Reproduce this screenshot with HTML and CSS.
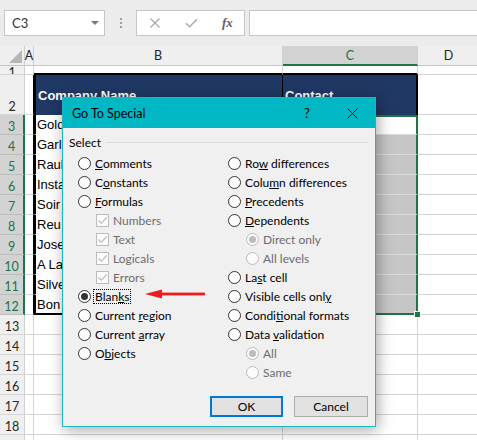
FILE: index.html
```html
<!DOCTYPE html>
<html>
<head>
<meta charset="utf-8">
<link rel="stylesheet" href="styles.css">
</head>
<body>
<div class="toolbar">
  <div class="namebox"><span>C3</span><span class="dd"></span></div>
  <div class="grip"><i></i><i></i><i></i></div>
  <div class="fxbox">
    <svg class="ico-x" width="10" height="10" viewBox="0 0 10 10"><path d="M0.5 0.5L9.5 9.5M9.5 0.5L0.5 9.5" stroke="#a9a9a9" stroke-width="1.3" fill="none"/></svg>
    <svg class="ico-ok" width="13" height="10" viewBox="0 0 13 10"><path d="M1 5.2L4.6 8.8L12 1.2" stroke="#a9a9a9" stroke-width="1.5" fill="none"/></svg>
    <span class="fx">fx</span>
  </div>
  <div class="formula"></div>
</div>

<div class="sheet">
  <div class="corner"><svg width="24" height="19" viewBox="0 0 24 19"><path d="M9 17H22V4Z" fill="#b7b7b7"/></svg></div>
  <div class="ch">A</div>
  <div class="ch">B</div>
  <div class="ch sel">C</div>
  <div class="ch">D</div>

  <div class="rh r1">1</div>
  <div class="c"></div>
  <div class="c ttop"></div>
  <div class="c ttop"></div>
  <div class="c"></div>

  <div class="rh">2</div>
  <div class="c tl"></div>
  <div class="c hdr hb">Company Name</div>
  <div class="c hdr hc">Contact</div>
  <div class="c"></div>

  <div class="rh sel">3</div>
  <div class="c tl"></div>
  <div class="c tb">Gold</div>
  <div class="c sc first"></div>
  <div class="c"></div>

  <div class="rh sel">4</div>
  <div class="c tl"></div>
  <div class="c tb">Garl</div>
  <div class="c sc gray"></div>
  <div class="c"></div>

  <div class="rh sel">5</div>
  <div class="c tl"></div>
  <div class="c tb">Raul</div>
  <div class="c sc gray"></div>
  <div class="c"></div>

  <div class="rh sel">6</div>
  <div class="c tl"></div>
  <div class="c tb">Insta</div>
  <div class="c sc gray"></div>
  <div class="c"></div>

  <div class="rh sel">7</div>
  <div class="c tl"></div>
  <div class="c tb">Soir</div>
  <div class="c sc gray"></div>
  <div class="c"></div>

  <div class="rh sel">8</div>
  <div class="c tl"></div>
  <div class="c tb">Reu</div>
  <div class="c sc gray"></div>
  <div class="c"></div>

  <div class="rh sel">9</div>
  <div class="c tl"></div>
  <div class="c tb">Jose</div>
  <div class="c sc gray"></div>
  <div class="c"></div>

  <div class="rh sel">10</div>
  <div class="c tl"></div>
  <div class="c tb">A La</div>
  <div class="c sc gray"></div>
  <div class="c"></div>

  <div class="rh sel">11</div>
  <div class="c tl"></div>
  <div class="c tb">Silve</div>
  <div class="c sc gray"></div>
  <div class="c"></div>

  <div class="rh sel">12</div>
  <div class="c tl"></div>
  <div class="c tb tbot">Bon</div>
  <div class="c sc gray last"><span class="handle"></span></div>
  <div class="c"></div>

  <div class="rh">13</div><div class="c"></div><div class="c"></div><div class="c"></div><div class="c"></div>
  <div class="rh">14</div><div class="c"></div><div class="c"></div><div class="c"></div><div class="c"></div>
  <div class="rh">15</div><div class="c"></div><div class="c"></div><div class="c"></div><div class="c"></div>
  <div class="rh">16</div><div class="c"></div><div class="c"></div><div class="c"></div><div class="c"></div>
  <div class="rh">17</div><div class="c"></div><div class="c"></div><div class="c"></div><div class="c"></div>
  <div class="rh">18</div><div class="c"></div><div class="c"></div><div class="c"></div><div class="c"></div>
  <div class="rh"></div><div class="c"></div><div class="c"></div><div class="c"></div><div class="c"></div>
</div>

<div class="dialog">
  <div class="titlebar">
    <span class="title">Go To Special</span>
    <span class="help">?</span>
    <svg class="close" width="11" height="11" viewBox="0 0 11 11"><path d="M0.5 0.5L10.5 10.5M10.5 0.5L0.5 10.5" stroke="#000" stroke-width="1" fill="none"/></svg>
  </div>
  <div class="dbody">
    <div class="group"><span>Select</span><span class="gline"></span></div>
    <div class="opts">
      <div class="col left">
        <div class="opt"><span class="radio"></span><span><u>C</u>omments</span></div>
        <div class="opt"><span class="radio"></span><span>C<u>o</u>nstants</span></div>
        <div class="opt"><span class="radio"></span><span><u>F</u>ormulas</span></div>
        <div class="opt sub dis"><span class="chk"><svg width="11" height="11" viewBox="0 0 11 11"><path d="M1.5 5.5L4.3 8.3L9.8 2.3" stroke="#b4b4b4" stroke-width="1.1" fill="none"/></svg></span><span>Numbers</span></div>
        <div class="opt sub dis"><span class="chk"><svg width="11" height="11" viewBox="0 0 11 11"><path d="M1.5 5.5L4.3 8.3L9.8 2.3" stroke="#b4b4b4" stroke-width="1.1" fill="none"/></svg></span><span>Text</span></div>
        <div class="opt sub dis"><span class="chk"><svg width="11" height="11" viewBox="0 0 11 11"><path d="M1.5 5.5L4.3 8.3L9.8 2.3" stroke="#b4b4b4" stroke-width="1.1" fill="none"/></svg></span><span>Logicals</span></div>
        <div class="opt sub dis"><span class="chk"><svg width="11" height="11" viewBox="0 0 11 11"><path d="M1.5 5.5L4.3 8.3L9.8 2.3" stroke="#b4b4b4" stroke-width="1.1" fill="none"/></svg></span><span>Errors</span></div>
        <div class="opt"><span class="radio on"></span><span class="focus">Blan<u>k</u>s</span></div>
        <div class="opt"><span class="radio"></span><span>Current <u>r</u>egion</span></div>
        <div class="opt"><span class="radio"></span><span>Current <u>a</u>rray</span></div>
        <div class="opt"><span class="radio"></span><span>O<u>b</u>jects</span></div>
      </div>
      <div class="col right">
        <div class="opt"><span class="radio"></span><span>Ro<u>w</u> differences</span></div>
        <div class="opt"><span class="radio"></span><span>Colu<u>m</u>n differences</span></div>
        <div class="opt"><span class="radio"></span><span><u>P</u>recedents</span></div>
        <div class="opt"><span class="radio"></span><span><u>D</u>ependents</span></div>
        <div class="opt sub dis"><span class="radio dis on"></span><span>Direct only</span></div>
        <div class="opt sub dis"><span class="radio dis"></span><span>All levels</span></div>
        <div class="opt"><span class="radio"></span><span>La<u>s</u>t cell</span></div>
        <div class="opt"><span class="radio"></span><span>Visible cells onl<u>y</u></span></div>
        <div class="opt"><span class="radio"></span><span>Condi<u>t</u>ional formats</span></div>
        <div class="opt"><span class="radio"></span><span>Data <u>v</u>alidation</span></div>
        <div class="opt sub dis"><span class="radio dis on"></span><span>All</span></div>
        <div class="opt sub dis"><span class="radio dis"></span><span>Same</span></div>
      </div>
    </div>
    <div class="buttons">
      <div class="btn ok">OK</div>
      <div class="btn cancel">Cancel</div>
    </div>
  </div>
</div>

<svg class="arrow" width="62" height="12" viewBox="0 0 62 12"><path d="M0 6L17 1.5V10.5Z" fill="#ee1c1c"/><rect x="16" y="4.6" width="44" height="2.8" fill="#ee1c1c"/></svg>
</body>
</html>
```

FILE: styles.css
```css
* { box-sizing: border-box; }
html, body { margin: 0; padding: 0; }
body {
  width: 477px;
  height: 440px;
  overflow: hidden;
  background: #fff;
  font-family: "Lato", "Noto Sans", sans-serif;
  color: #000;
  position: relative;
}

/* ---------- toolbar ---------- */
.toolbar {
  height: 46px;
  background: #ececec;
  display: flex;
  align-items: flex-start;
  padding: 10px 0 0 4px;
}
.namebox {
  width: 101px;
  height: 26px;
  background: #fff;
  border: 1px solid #c6c6c6;
  display: flex;
  align-items: center;
  justify-content: space-between;
  padding: 0 5px 0 7px;
  font-size: 13px;
  color: #333;
}
.dd {
  width: 0;
  height: 0;
  border-left: 4px solid transparent;
  border-right: 4px solid transparent;
  border-top: 4px solid #7a7a7a;
}
.grip {
  width: 31px;
  height: 26px;
  display: flex;
  flex-direction: column;
  align-items: center;
  justify-content: center;
  gap: 2px;
}
.grip i { display: block; width: 2px; height: 2px; background: #a0a0a0; }
.fxbox {
  width: 109px;
  height: 26px;
  background: #fff;
  border: 1px solid #c6c6c6;
  display: flex;
  align-items: center;
  padding-left: 13px;
}
.ico-ok { margin-left: 25px; }
.fx {
  margin-left: 24px;
  font-family: "Liberation Serif", serif;
  font-style: italic;
  font-weight: bold;
  font-size: 13px;
  color: #5f5f5f;
}
.formula {
  flex: 1;
  height: 26px;
  margin-left: 4px;
  margin-right: -5px;
  background: #fff;
  border: 1px solid #c6c6c6;
}

/* ---------- sheet ---------- */
.sheet {
  display: grid;
  grid-template-columns: 25px 9px 249px 135px 62px;
  grid-template-rows: 20px 9px 40px repeat(17, 20px);
}
.corner, .ch, .rh {
  background: #efefef;
  font-size: 12.5px;
  color: #262626;
}
.corner {
  border-right: 1px solid #d0d0d0;
  border-bottom: 1px solid #c6c6c6;
}
.corner svg { display: block; }
.ch {
  border-right: 1px solid #d0d0d0;
  border-bottom: 1px solid #c6c6c6;
  display: flex;
  align-items: center;
  justify-content: center;
}
.ch.sel {
  background: #d2d2d2;
  border-bottom: 2px solid #217346;
  color: #217346;
}
.rh {
  border-right: 1px solid #d0d0d0;
  border-bottom: 1px solid #d6d6d6;
  display: flex;
  align-items: flex-end;
  justify-content: center;
  line-height: 14px;
  overflow: hidden;
}
.rh.r1 { align-items: flex-start; }
.rh.sel {
  background: #d2d2d2;
  border-right: 2px solid #217346;
  border-bottom-color: #bdbdbd;
  color: #217346;
}
.c {
  border-right: 1px solid #d4d4d4;
  border-bottom: 1px solid #d4d4d4;
  min-width: 0;
  overflow: hidden;
}
.ttop { border-bottom: 2px solid #000; }
.tl { border-right: 1px solid #000; }
.hdr {
  background: #203864;
  color: #fff;
  font-family: "Liberation Sans", sans-serif;
  font-weight: bold;
  font-size: 13px;
  display: flex;
  align-items: center;
  white-space: nowrap;
  border-bottom: 0;
}
.hb { border-left: 2px solid #000; border-right: 1px solid #000; padding-left: 2px; }
.hc { border-right: 2px solid #000; padding-left: 2px; }
.tb {
  border-left: 2px solid #000;
  border-right: 0;
  border-bottom: 1px solid #fff;
  display: flex;
  align-items: center;
  padding-left: 1px;
  font-family: "Liberation Sans", sans-serif;
  font-size: 13px;
  white-space: nowrap;
}
.tb.tbot { border-bottom: 2px solid #000; }
.sc {
  border-left: 2px solid #217346;
  border-right: 2px solid #217346;
  border-bottom: 1px solid #dcdcdc;
}
.sc.first { border-top: 2px solid #217346; background: #fff; }
.sc.gray { background: #c6c6c6; }
.sc.last {
  border-bottom: 2px solid #217346;
  position: relative;
  overflow: visible;
}
.handle {
  position: absolute;
  right: -5px;
  bottom: -5px;
  width: 7px;
  height: 7px;
  background: #217346;
  border: 1px solid #fff;
}

/* ---------- dialog ---------- */
.dialog {
  position: absolute;
  left: 62px;
  top: 97px;
  width: 314px;
  height: 330px;
  border: 1px solid #1ab6c2;
  background: #f0f0f0;
  box-shadow: 2px 3px 14px rgba(0, 0, 0, 0.35);
  display: flex;
  flex-direction: column;
  font-size: 12px;
}
.titlebar {
  height: 30px;
  background: #00b7c3;
  display: flex;
  align-items: center;
  padding: 0 17px 0 9px;
  flex: none;
}
.title { flex: 1; font-size: 12.5px; }
.help { width: 12px; text-align: center; margin-right: 34px; font-size: 13px; }
.close { display: block; }
.dbody {
  flex: 1;
  display: flex;
  flex-direction: column;
  padding: 6px 7px 9px 6px;
}
.group {
  display: flex;
  align-items: center;
  height: 16px;
}
.gline {
  flex: 1;
  margin-left: 5px;
  border-top: 1px solid #dadada;
}
.opts {
  display: flex;
  margin-top: 4px;
}
.col.left { width: 159px; padding-left: 9px; }
.col.right { flex: 1; }
.opt {
  height: 19px;
  display: flex;
  align-items: center;
  gap: 4px;
  white-space: nowrap;
}
.opt.sub { padding-left: 18px; }
.opt.dis { color: #6d6d6d; }
.opt u { text-underline-offset: 1px; }
.radio {
  flex: none;
  width: 13px;
  height: 13px;
  border: 1px solid #333;
  border-radius: 50%;
  background: #fff;
  display: flex;
  align-items: center;
  justify-content: center;
}
.radio.on::after {
  content: "";
  width: 7px;
  height: 7px;
  border-radius: 50%;
  background: #333;
}
.radio.dis { border-color: #bcbcbc; background: #fbfbfb; }
.radio.dis.on::after { background: #bcbcbc; }
.chk {
  flex: none;
  width: 13px;
  height: 13px;
  border: 1px solid #bcbcbc;
  background: #fbfbfb;
}
.chk svg { display: block; }
.focus {
  border: 1px dotted #000;
  padding: 0 1px;
  line-height: 13px;
  margin-left: -2px;
}
.buttons {
  margin-top: auto;
  display: flex;
  justify-content: flex-end;
  gap: 11px;
}
.btn {
  height: 21px;
  background: #e1e1e1;
  display: flex;
  align-items: center;
  justify-content: center;
  font-size: 12px;
}
.btn.ok { width: 73px; border: 2px solid #0078d7; }
.btn.cancel { width: 74px; border: 1px solid #adadad; }

/* ---------- annotation arrow ---------- */
.arrow {
  position: absolute;
  left: 145px;
  top: 288px;
}
```
